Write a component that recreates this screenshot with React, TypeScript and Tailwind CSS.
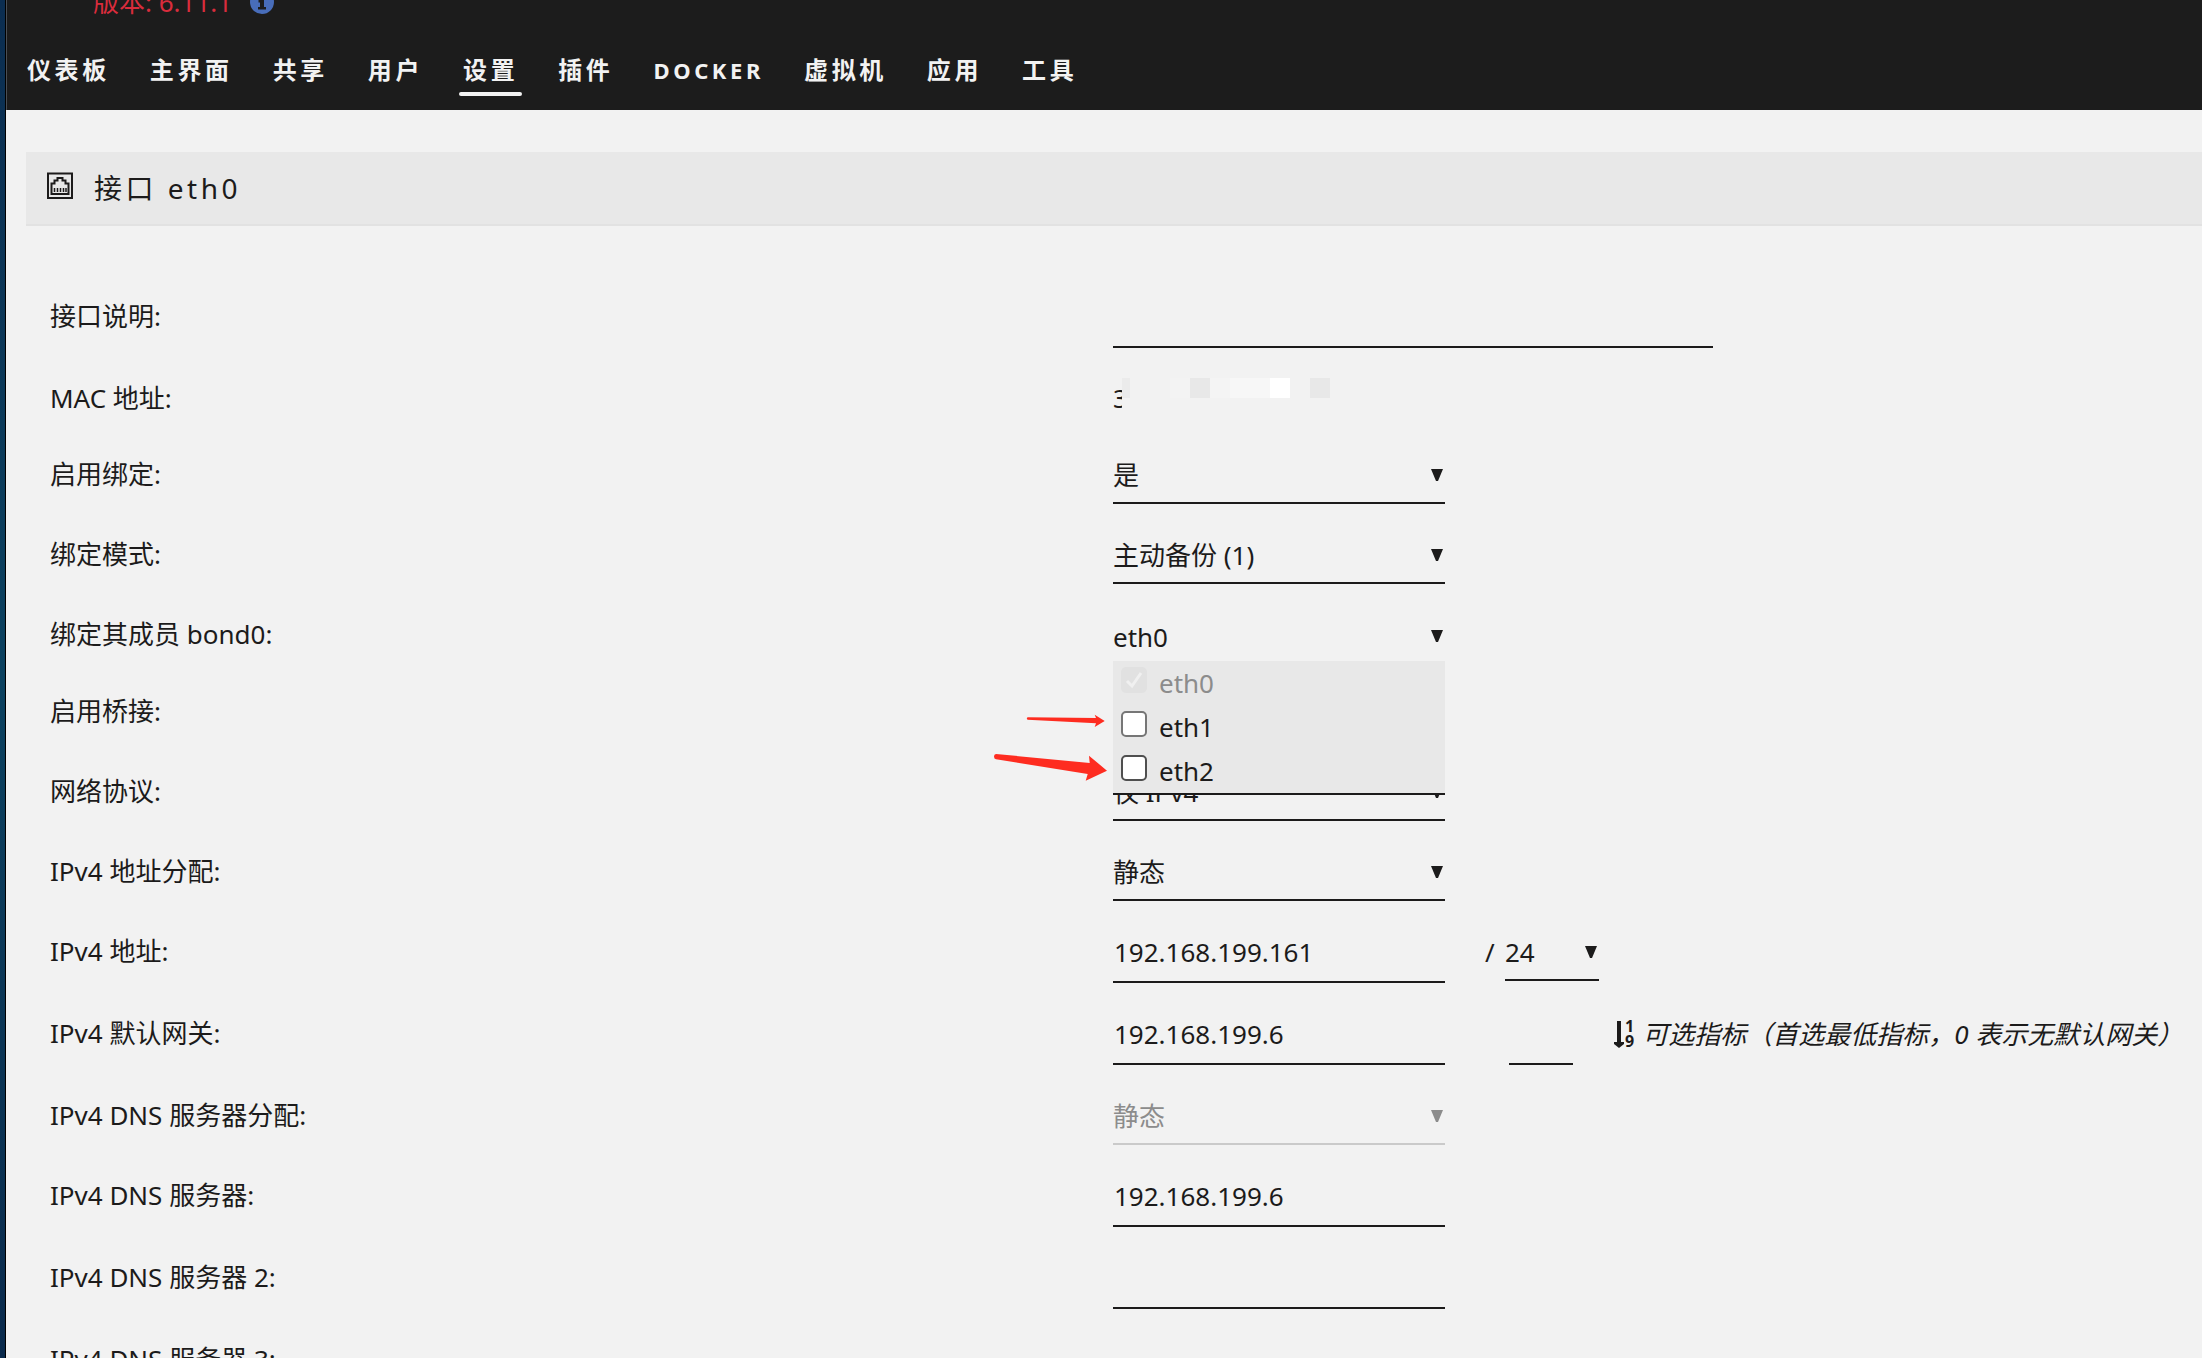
import { useState } from 'react';
import type { ReactNode } from 'react';

const navItems = ['仪表板', '主界面', '共享', '用户', '设置', '插件', 'DOCKER', '虚拟机', '应用', '工具'];

function Caret({ className = '' }: { className?: string }) {
  return (
    <svg
      className={`pointer-events-none absolute right-0.5 h-3 w-3 ${className}`}
      viewBox="0 0 12 12"
      fill="currentColor"
      aria-hidden="true"
    >
      <path d="M0 0H12L7 12H5Z" />
    </svg>
  );
}

type RowProps = { label: string; htmlFor?: string; height?: string; children: ReactNode };

function Row({ label, htmlFor, height = 'h-20', children }: RowProps) {
  return (
    <div className={`grid shrink-0 grid-cols-2 items-start ${height}`}>
      <label htmlFor={htmlFor} className="leading-[48px]">
        {label}
      </label>
      <div className="flex items-start">{children}</div>
    </div>
  );
}

type SelectProps = { id: string; options: string[]; width?: string; disabled?: boolean; label?: string };

function Select({ id, options, width = 'w-[332px]', disabled, label }: SelectProps) {
  return (
    <div className={`relative shrink-0 ${width} ${disabled ? 'text-[#8c8c8c]' : ''}`}>
      <select
        id={id}
        aria-label={label}
        disabled={disabled}
        className="block h-[54px] w-full appearance-none rounded-none border-b-2 border-[#1c1b1b] bg-transparent pb-0.5 opacity-100 outline-none disabled:border-[#cacaca]"
      >
        {options.map((option) => (
          <option key={option}>{option}</option>
        ))}
      </select>
      <Caret className="top-[19px]" />
    </div>
  );
}

type InputProps = { id: string; value?: string; width?: string; label?: string };

function TextInput({ id, value = '', width = 'w-[332px]', label }: InputProps) {
  return (
    <input
      id={id}
      type="text"
      aria-label={label}
      defaultValue={value}
      className={`h-14 shrink-0 rounded-none border-b-2 border-[#1c1b1b] bg-transparent px-px pb-1 outline-none ${width}`}
    />
  );
}

function BondMembers() {
  const [checked, setChecked] = useState<string[]>([]);

  const toggle = (name: string) =>
    setChecked((prev) => (prev.includes(name) ? prev.filter((n) => n !== name) : [...prev, name]));

  return (
    <div className="relative z-10 w-[332px]">
      <button id="bond" type="button" aria-expanded="true" className="block h-[51px] w-full pt-[3px] text-left leading-[48px]">
        eth0
        <Caret className="top-5" />
      </button>

      <div className="absolute top-full left-0 w-full border-b-2 border-[#1c1b1b] bg-[#e8e8e8]">
        <label className="relative flex h-11 items-start gap-3 pl-2 leading-[44px] text-[#8c8c8c]">
          <input
            type="checkbox"
            checked
            disabled
            readOnly
            className="mt-1.5 size-[26px] appearance-none rounded-[5px] bg-[#e1e1e1]"
          />
          <svg className="absolute top-1.5 left-2 size-[26px]" viewBox="0 0 26 26" fill="none" aria-hidden="true">
            <path d="M6 14L11 19L20 6" stroke="#f0f0f0" strokeWidth="3" />
          </svg>
          eth0
        </label>
        <label className="flex h-11 items-start gap-3 pl-2 leading-[44px]">
          <input
            type="checkbox"
            checked={checked.includes('eth1')}
            onChange={() => toggle('eth1')}
            className="mt-1.5 size-[26px] appearance-none rounded-[5px] border-2 border-[#767676] bg-white checked:bg-[#0075ff]"
          />
          eth1
        </label>
        <label className="flex h-11 items-start gap-3 pl-2 leading-[44px]">
          <input
            type="checkbox"
            checked={checked.includes('eth2')}
            onChange={() => toggle('eth2')}
            className="mt-1.5 size-[26px] appearance-none rounded-[5px] border-2 border-[#4f4f4f] bg-white checked:bg-[#0075ff]"
          />
          eth2
        </label>
      </div>

      {/* Red pointers next to eth1 and eth2 */}
      <svg
        className="pointer-events-none absolute top-[100px] right-full mr-1 h-[76px] w-[120px]"
        viewBox="0 0 120 76"
        fill="#fe2c20"
        aria-hidden="true"
      >
        <path d="M38.500 7.300Q37 8.500 38.500 9.700L107 13.300L105.700 17L115.700 11L105.700 4.700L107 8Z" />
        <path d="M7 44Q5 44 5 46.500Q5 49 7 49.200L98.700 64L96.700 70.700L118 60.700L100 45.700L100.700 53Z" />
      </svg>
    </div>
  );
}

export default function App() {
  return (
    <div className="flex h-screen overflow-hidden bg-[#f2f2f2] font-['Noto_Sans','Noto_Sans_CJK_SC',sans-serif] text-[26px] text-[#1c1b1b]">
      {/* Desktop edge behind the window */}
      <div className="w-1.5 shrink-0 border-r border-black bg-linear-to-b from-[#0b2d50] via-[#0c4260] to-[#0a2a4c]" />

      <div className="flex min-w-0 flex-1 flex-col">
        {/* Header */}
        <header className="flex h-[110px] shrink-0 flex-col justify-end overflow-hidden border-l border-[#4a4f55] bg-[#1c1c1c] text-[#f2f2f2]">
          <div className="flex h-10 shrink-0 items-center gap-[18px] pl-[86px] leading-10 text-[#d92c3c]">
            <span>版本: 6.11.1</span>
            <svg className="size-6" viewBox="0 0 24 24" aria-hidden="true">
              <circle cx="12" cy="12" r="12" fill="#486dba" />
              <path d="M10 4h4v4h-4zM8.500 10H14v7h2v2.500H8V17h2v-4.500H8.500z" fill="#1c1c1c" />
            </svg>
          </div>
          <nav className="flex gap-10 pt-[30px] pb-3.5 pl-5 text-2xl font-bold tracking-[0.15em]">
            {navItems.map((item) => (
              <a key={item} href="#" className="shrink-0">
                <span className={`block leading-9 ${item === 'DOCKER' ? 'text-[22px]' : ''}`}>{item}</span>
                <span className={`-mx-1 mt-1 block h-1 rounded-full ${item === '设置' ? 'bg-[#f2f2f2]' : ''}`} />
              </a>
            ))}
          </nav>
        </header>

        {/* Section title */}
        <div className="mt-[42px] ml-5 flex h-[74px] shrink-0 items-center gap-5 border-b-2 border-[#e2e2e2] bg-[#e8e8e8] pl-5">
          <svg className="mb-1 size-7" viewBox="0 0 28 28" fill="none" stroke="#1c1b1b" aria-hidden="true">
            <path d="M2 1.500H26V26H2Z" strokeWidth="2" />
            <path d="M5.500 22V11.500H8.500V8.500H11.500V6H16.500V8.500H19.500V11.500H22.500V22Z" strokeWidth="2" />
            <path d="M8.500 16V20M11.500 16V20M14.500 16V20M17.500 16V20M20 16V20" strokeWidth="1.500" />
          </svg>
          <h1 className="text-[28px] tracking-[0.125em]">接口 eth0</h1>
        </div>

        {/* Settings */}
        <form className="mt-[66px] flex flex-col pr-[26px] pl-11">
          <Row label="接口说明:" htmlFor="desc" height="h-[82px]">
            <TextInput id="desc" width="w-[600px]" />
          </Row>
          <Row label="MAC 地址:" height="h-[76px]">
            <span className="w-[9px] overflow-hidden leading-[48px]">3</span>
            {/* Masked address */}
            <span className="mt-1 flex h-5">
              <span className="w-2 bg-[#ebebeb]" />
              <span className="w-10" />
              <span className="w-5 bg-[#f3f3f3]" />
              <span className="w-5 bg-[#e8e8e8]" />
              <span className="w-5 bg-[#f4f4f4]" />
              <span className="w-10 bg-[#f7f7f7]" />
              <span className="w-5 bg-white" />
              <span className="w-5" />
              <span className="w-5 bg-[#e8e8e8]" />
            </span>
          </Row>
          <Row label="启用绑定:" htmlFor="bonding">
            <Select id="bonding" options={['是', '否']} />
          </Row>
          <Row label="绑定模式:" htmlFor="mode">
            <Select id="mode" options={['主动备份 (1)']} />
          </Row>
          <Row label="绑定其成员 bond0:" htmlFor="bond" height="h-[77px]">
            <BondMembers />
          </Row>
          <Row label="启用桥接:" htmlFor="bridging">
            <Select id="bridging" options={['是', '否']} />
          </Row>
          <Row label="网络协议:" htmlFor="protocol">
            <Select id="protocol" options={['仅 IPv4']} />
          </Row>
          <Row label="IPv4 地址分配:" htmlFor="assign">
            <Select id="assign" options={['静态', '自动']} />
          </Row>
          <Row label="IPv4 地址:" htmlFor="ip" height="h-[82px]">
            <TextInput id="ip" value="192.168.199.161" />
            <span className="ml-10 w-5 leading-[50px]">/</span>
            <Select id="netmask" options={['24']} width="w-[94px]" label="子网掩码" />
          </Row>
          <Row label="IPv4 默认网关:" htmlFor="gateway" height="h-[82px]">
            <TextInput id="gateway" value="192.168.199.6" />
            <span className="w-16 shrink-0" />
            <TextInput id="metric" width="w-16" label="可选指标" />
            <span className="ml-10 flex h-[50px] shrink-0 items-center">
              <svg className="h-[27px] w-3" viewBox="0 0 12 27" fill="#1c1b1b" aria-hidden="true">
                <path d="M4 0H8V21H11V23L6 27L1 23V21H4Z" />
              </svg>
              <span className="flex flex-col text-base leading-[15px] font-bold">
                <span>1</span>
                <span>9</span>
              </span>
              <i className="ml-2 whitespace-nowrap">可选指标（首选最低指标，0 表示无默认网关）</i>
            </span>
          </Row>
          <Row label="IPv4 DNS 服务器分配:" htmlFor="dns-assign">
            <Select id="dns-assign" options={['静态']} disabled />
          </Row>
          <Row label="IPv4 DNS 服务器:" htmlFor="dns1" height="h-[82px]">
            <TextInput id="dns1" value="192.168.199.6" />
          </Row>
          <Row label="IPv4 DNS 服务器 2:" htmlFor="dns2" height="h-[82px]">
            <TextInput id="dns2" />
          </Row>
          <Row label="IPv4 DNS 服务器 3:" htmlFor="dns3" height="h-[82px]">
            <TextInput id="dns3" />
          </Row>
        </form>
      </div>
    </div>
  );
}
